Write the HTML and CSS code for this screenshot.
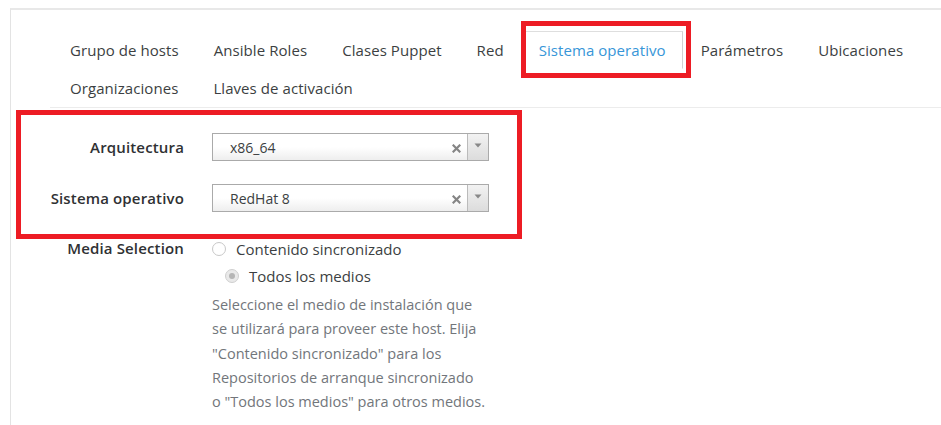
FILE: index.html
```html
<!DOCTYPE html>
<html lang="es">
<head>
<meta charset="utf-8">
<title>Sistema operativo</title>
<link rel="stylesheet" href="styles.css">
</head>
<body>
<div class="frame">
  <ul class="tabs">
    <li><a>Grupo de hosts</a></li>
    <li><a>Ansible Roles</a></li>
    <li><a>Clases Puppet</a></li>
    <li><a>Red</a></li>
    <li class="active"><a>Sistema operativo</a></li>
    <li><a>Parámetros</a></li>
    <li><a>Ubicaciones</a></li>
    <li><a>Organizaciones</a></li>
    <li><a>Llaves de activación</a></li>
  </ul>
  <div class="form">
    <div class="row">
      <label class="lbl">Arquitectura</label>
      <div class="select">
        <span class="val">x86_64</span>
        <span class="clear"><svg width="9" height="9" viewBox="0 0 9 9"><path d="M1.5 1.5 L7.5 7.5 M7.5 1.5 L1.5 7.5" stroke="#858585" stroke-width="2.2" stroke-linecap="square"/></svg></span>
        <span class="arrow"><svg width="8" height="5" viewBox="0 0 8 5"><path d="M0.5 0.5 L7.5 0.5 L4 4.5 Z" fill="#888"/></svg></span>
      </div>
    </div>
    <div class="row">
      <label class="lbl">Sistema operativo</label>
      <div class="select">
        <span class="val">RedHat 8</span>
        <span class="clear"><svg width="9" height="9" viewBox="0 0 9 9"><path d="M1.5 1.5 L7.5 7.5 M7.5 1.5 L1.5 7.5" stroke="#858585" stroke-width="2.2" stroke-linecap="square"/></svg></span>
        <span class="arrow"><svg width="8" height="5" viewBox="0 0 8 5"><path d="M0.5 0.5 L7.5 0.5 L4 4.5 Z" fill="#888"/></svg></span>
      </div>
    </div>
    <div class="row media">
      <label class="lbl">Media Selection</label>
      <div class="control">
        <div class="radio"><span class="circle"></span>Contenido sincronizado</div>
        <div class="radio indent"><span class="circle checked"></span>Todos los medios</div>
        <p class="help">Seleccione el medio de instalación que se utilizará para proveer este host. Elija "Contenido sincronizado" para los Repositorios de arranque sincronizado<br>o "Todos los medios" para otros medios.</p>
      </div>
    </div>
  </div>
</div>
<div class="mark mark-tab"></div>
<div class="mark mark-form"></div>
</body>
</html>
```
FILE: styles.css
```css
html, body {
  margin: 0;
  padding: 0;
  background: #fff;
  font-family: "Open Sans", "Liberation Sans", sans-serif;
  font-size: 15px;
  color: #3c3f42;
  overflow: hidden;
}
.frame {
  margin: 8px 0 0 10px;
  height: 417px;
  border-top: 2px solid #e8e8e8;
  border-left: 1px solid #e3e3e3;
  box-sizing: border-box;
  padding-top: 21px;
}
.tabs {
  list-style: none;
  margin: 0 0 0 39px;
  padding: 0 0 0 5px;
  width: 910px;
  display: flex;
  flex-wrap: wrap;
  border-bottom: 1px solid #ececec;
}
.tabs li {
  margin-right: 5px;
}
.tabs li.active {
  margin-right: 3px;
}
.tabs a {
  display: block;
  height: 38px;
  line-height: 38px;
  padding: 0 15px;
  box-sizing: border-box;
  color: #3c3f42;
  white-space: nowrap;
  letter-spacing: 0.07px;
}
.tabs .active a {
  border: 1px solid #dedede;
  border-bottom-color: transparent;
  border-right-color: #d2d2d2;
  line-height: 36px;
  padding: 0 16px 0 14px;
  color: #3796d8;
}
.form {
  padding-top: 25px;
}
.row {
  display: grid;
  grid-template-columns: 173px 277px;
  column-gap: 28px;
  align-items: center;
  margin-bottom: 23px;
}
.lbl {
  text-align: right;
  font-weight: 600;
  letter-spacing: 0.15px;
  color: #2f3133;
}
.select {
  height: 28px;
  border: 1px solid #aaa;
  box-sizing: border-box;
  display: flex;
  align-items: center;
  background: linear-gradient(to bottom, #fff 0%, #fff 50%, #eee 100%);
  box-shadow: inset 0 1px 0 #fff;
}
.val {
  flex: 1;
  padding-left: 17px;
  font-size: 14px;
  color: #3c3f42;
}
.clear {
  width: 22px;
  display: flex;
  justify-content: center;
  padding-top: 3px;
}
.arrow {
  width: 21px;
  align-self: stretch;
  border-left: 1px solid #bbb;
  background: linear-gradient(to bottom, #f2f2f2, #dcdcdc);
  display: flex;
  justify-content: center;
  align-items: center;
  padding-bottom: 4px;
  box-sizing: border-box;
}
.media {
  align-items: start;
}
.media .lbl {
  line-height: 27px;
}
.radio {
  display: flex;
  align-items: center;
  height: 27px;
}
.radio.indent {
  padding-left: 13px;
}
.circle {
  width: 12px;
  height: 12px;
  border: 1px solid #c8c8c8;
  border-radius: 50%;
  margin-right: 10px;
  background: #fff;
  box-sizing: content-box;
  position: relative;
}
.circle.checked {
  background: #e9e9e9;
  border-color: #cfcfcf;
}
.circle.checked::after {
  content: "";
  position: absolute;
  left: 3px;
  top: 3px;
  width: 6px;
  height: 6px;
  border-radius: 50%;
  background: #b5b5b5;
}
.help {
  margin: 4px 0 0 0;
  font-size: 14.5px;
  line-height: 24.3px;
  color: #72767b;
}
.mark {
  position: absolute;
  border: 5px solid #ed1c24;
  box-sizing: border-box;
}
.mark-tab {
  left: 521px;
  top: 21px;
  width: 170px;
  height: 57px;
}
.mark-form {
  left: 16px;
  top: 110px;
  width: 506px;
  height: 129px;
}
```
